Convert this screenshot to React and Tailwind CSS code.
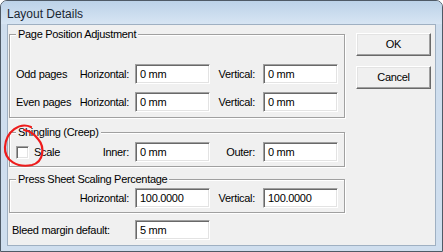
import React from "react";

const font = { fontFamily: '"Liberation Sans", Arial, sans-serif' };

function Field({ value }) {
  return (
    <div className="w-[75px] h-[20px] shrink-0 bg-white border border-t-[#a0a0a0] border-l-[#a0a0a0] border-b-white border-r-white shadow-[inset_1px_1px_0_#696969,inset_-1px_-1px_0_#e3e3e3] pl-[4px] flex items-center text-[11px] tracking-[-0.3px] text-black leading-none">
      {value}
    </div>
  );
}

function Group({ label, className, children }) {
  return (
    <div className={"relative border border-[#a0a0a0] shadow-[inset_1px_1px_0_#fff,1px_1px_0_#fff] " + className}>
      <div className="absolute left-[6px] top-[-8px] px-[2px] bg-[#f0f0f0] text-[11px] tracking-[-0.3px] leading-[14px] text-black">
        {label}
      </div>
      {children}
    </div>
  );
}

function Button({ children }) {
  return (
    <div className="w-[75px] h-[23px] flex items-center justify-center bg-[#f0f0f0] border border-t-white border-l-white border-b-[#696969] border-r-[#696969] shadow-[inset_-1px_-1px_0_#a0a0a0,inset_1px_1px_0_#e3e3e3] text-[11px] tracking-[-0.3px] text-black">
      {children}
    </div>
  );
}

function Row({ left, hLabel, hValue, vLabel, vValue }) {
  return (
    <div className="flex items-center h-[20px]">
      <div className="w-[125px] flex items-center justify-between pl-[6px] pr-[6px] text-[11px] tracking-[-0.3px] text-black">
        <span>{left}</span>
        <span>{hLabel}</span>
      </div>
      <Field value={hValue} />
      <div className="w-[53px] text-right pr-[8px] text-[11px] tracking-[-0.3px] text-black">{vLabel}</div>
      <Field value={vValue} />
    </div>
  );
}

export default function App() {
  return (
    <div className="w-[443px] h-[252px] relative overflow-hidden bg-white" style={font}>
      <div className="w-[443px] h-[252px] flex flex-col bg-[#cfdeee] border border-[#4f5a66] rounded-t-[7px] overflow-hidden">
        <div className="h-[23px] shrink-0 bg-gradient-to-b from-[#bcd2e8] to-[#d7e5f3] flex items-center pl-[6px] pt-[2px]">
          <span className="text-[12px] text-[#1b2733]">Layout Details</span>
        </div>
        <div className="flex-1 mx-[6px] mb-[5px] border border-[#9fb0c2] bg-[#f0f0f0] flex">
          <div className="w-[337px] pl-[1px] flex flex-col">
            <Group label="Page Position Adjustment" className="mt-[9px] h-[84px] pt-[29px]">
              <div className="flex flex-col gap-[8px]">
                <Row left="Odd pages" hLabel="Horizontal:" hValue="0 mm" vLabel="Vertical:" vValue="0 mm" />
                <Row left="Even pages" hLabel="Horizontal:" hValue="0 mm" vLabel="Vertical:" vValue="0 mm" />
              </div>
            </Group>
            <Group label="Shingling (Creep)" className="mt-[14px] h-[35px] pt-[9px]">
              <div className="flex items-center h-[20px]">
                <div className="w-[125px] flex items-center pl-[6px] pr-[6px] text-[11px] tracking-[-0.3px] text-black">
                  <div className="w-[13px] h-[13px] bg-white border border-t-[#a0a0a0] border-l-[#a0a0a0] border-b-white border-r-white shadow-[inset_1px_1px_0_#696969,inset_-1px_-1px_0_#e3e3e3]"></div>
                  <span className="ml-[5px]">Scale</span>
                  <span className="ml-auto">Inner:</span>
                </div>
                <Field value="0 mm" />
                <div className="w-[53px] text-right pr-[8px] text-[11px] tracking-[-0.3px] text-black">Outer:</div>
                <Field value="0 mm" />
              </div>
            </Group>
            <Group label="Press Sheet Scaling Percentage" className="mt-[12px] h-[34px] pt-[8px]">
              <Row left="" hLabel="Horizontal:" hValue="100.0000" vLabel="Vertical:" vValue="100.0000" />
            </Group>
            <div className="flex items-center h-[20px] mt-[7px]">
              <div className="w-[126px] pl-[3px] text-[11px] tracking-[-0.3px] text-black">Bleed margin default:</div>
              <Field value="5 mm" />
            </div>
          </div>
          <div className="ml-[11px] pt-[8px] flex flex-col gap-[10px]">
            <Button>OK</Button>
            <Button>Cancel</Button>
          </div>
        </div>
      </div>
      <svg className="absolute left-0 top-0 pointer-events-none" width="443" height="252" viewBox="0 0 443 252">
        <path
          d="M 31 127 C 20 122, 6 131, 5 147 C 4 161, 18 168, 32 165 C 44 162, 45 147, 38 139 C 35 135, 31 131, 24 130"
          fill="none"
          stroke="#ee1c1c"
          strokeWidth="2.2"
          strokeLinecap="round"
        />
      </svg>
    </div>
  );
}
